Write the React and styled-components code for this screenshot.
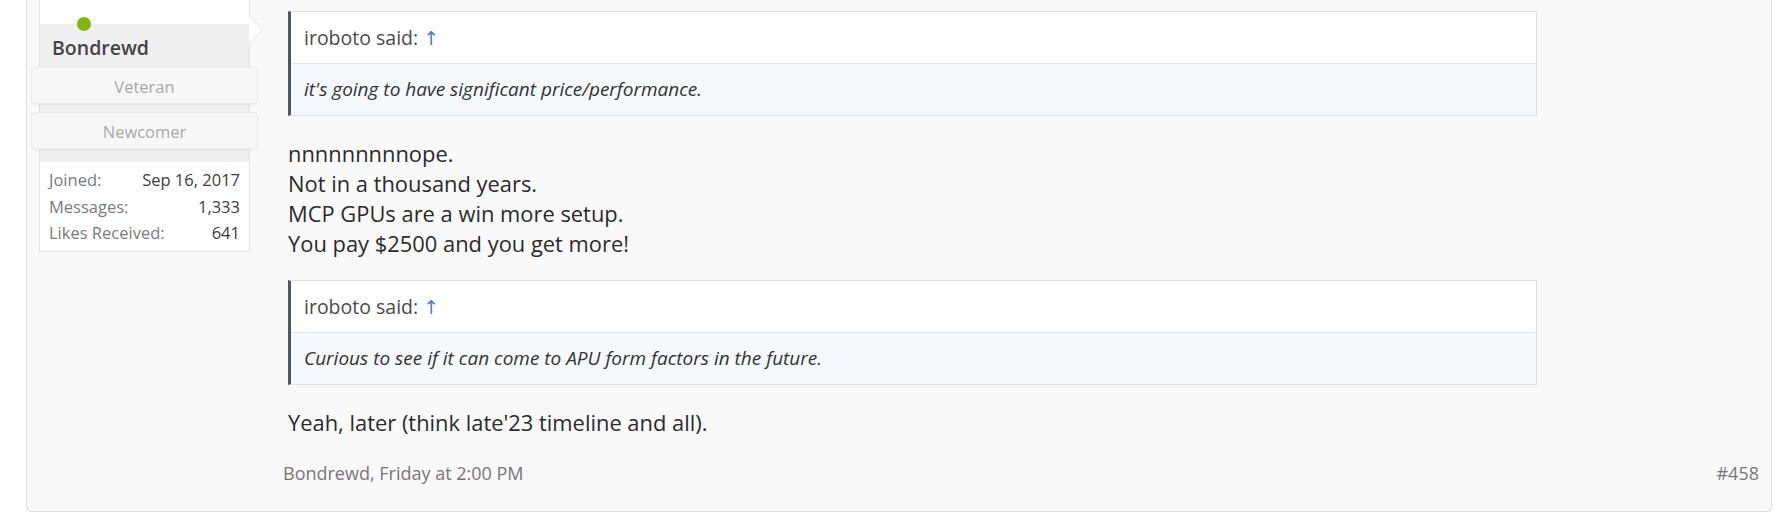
import React from 'react';
import styled, { createGlobalStyle } from 'styled-components';

const GlobalStyle = createGlobalStyle`
    body {
        margin: 0;
        background: #fff;
        font-family: "Open Sans", "Noto Sans", sans-serif;
    }
`;

const Page = styled.div`
    padding: 0 11px 11px 26px;
`;

const Post = styled.div`
    display: flex;
    background: #f9f9f9;
    border: 1px solid #dddddd;
    border-top: none;
    border-radius: 0 0 6px 6px;
    padding: 0 12px 0 12px;
`;

const UserCol = styled.div`
    width: 211px;
    flex-shrink: 0;
    margin-right: 38px;
`;

const UserBox = styled.div`
    position: relative;
    background: #fff;
    border: 1px solid #e3e3e3;
    border-top: none;
`;

const AvatarArea = styled.div`
    height: 24px;
    background: #fff;
`;

const OnlineDot = styled.span`
    position: absolute;
    left: 37px;
    top: 17px;
    width: 14px;
    height: 14px;
    border-radius: 50%;
    background: #7fb70e;
    z-index: 2;
`;

const Arrow = styled.span`
    position: absolute;
    left: 100%;
    top: 15px;
    width: 0;
    height: 0;
    border-top: 15px solid transparent;
    border-bottom: 15px solid transparent;
    border-left: 14px solid #e3e3e3;
    &::after {
        content: '';
        position: absolute;
        left: -14px;
        top: -14px;
        border-top: 14px solid transparent;
        border-bottom: 14px solid transparent;
        border-left: 13px solid #fff;
    }
`;

const NameBand = styled.div`
    background: #f0f0f0;
    padding: 12px 0 13px 12px;
`;

const UserName = styled.div`
    font-size: 19.5px;
    font-weight: 600;
    color: #444;
    line-height: 24px;
    margin-bottom: 7px;
`;

const Badge = styled.div`
    margin: 0 -9px 8px -21px;
    height: 37px;
    line-height: 37px;
    text-align: center;
    font-size: 16.5px;
    color: #a8a8a8;
    background: #f7f7f7;
    border: 1px solid #ececec;
    border-radius: 4px;
    box-sizing: border-box;
    box-shadow: 0 1px 3px rgba(0, 0, 0, 0.06);
    &:last-child {
        margin-bottom: 0;
    }
`;

const Info = styled.dl`
    margin: 0;
    padding: 5px 9px 4px 9px;
    font-size: 16.5px;
    line-height: 26.7px;
`;

const InfoRow = styled.div`
    display: flex;
    justify-content: space-between;
    dt {
        color: #7b7b7b;
    }
    dd {
        margin: 0;
        color: #3c3c3c;
    }
`;

const MessageCol = styled.div`
    flex: 1;
    min-width: 0;
    padding-top: 11px;
`;

const Quote = styled.div`
    max-width: 1249px;
    box-sizing: border-box;
    border: 1px solid #e1e1e1;
    border-left: 3px solid #47596a;
    margin: ${p => (p.first ? '0' : '21px')} 0 23px 0;
    line-height: 27px;
`;

const QuoteHead = styled.div`
    background: #fff;
    padding: 12px 13px 12px 13px;
    border-bottom: 1px solid #e1e4e7;
    font-size: 19.5px;
    color: #4a4a4a;
`;

const UpLink = styled.span`
    font-family: "DejaVu Sans", sans-serif;
    font-size: 19px;
    line-height: 0;
    color: #5580b5;
`;

const QuoteBody = styled.div`
    background: #f5f9fc;
    padding: 12px 13px 12px 13px;
    font-size: 19px;
    font-style: italic;
    color: #333;
`;

const Text = styled.div`
    font-size: 21.9px;
    line-height: 30px;
    color: #2b2b2b;
`;

const Meta = styled.div`
    display: flex;
    justify-content: space-between;
    margin-top: 23px;
    padding: 0 0 25px 0;
    margin-left: -5px;
    font-size: 18px;
    line-height: 25px;
    color: #777;
`;

const App = () => {
    return (
        <>
        <GlobalStyle/>
        <Page>
            <Post>
                <UserCol>
                    <UserBox>
                        <AvatarArea/>
                        <OnlineDot/>
                        <Arrow/>
                        <NameBand>
                            <UserName>Bondrewd</UserName>
                            <Badge>Veteran</Badge>
                            <Badge>Newcomer</Badge>
                        </NameBand>
                        <Info>
                            <InfoRow><dt>Joined:</dt><dd>Sep 16, 2017</dd></InfoRow>
                            <InfoRow><dt>Messages:</dt><dd>1,333</dd></InfoRow>
                            <InfoRow><dt>Likes Received:</dt><dd>641</dd></InfoRow>
                        </Info>
                    </UserBox>
                </UserCol>
                <MessageCol>
                    <Quote first>
                        <QuoteHead>iroboto said: <UpLink>↑</UpLink></QuoteHead>
                        <QuoteBody>it's going to have significant price/performance.</QuoteBody>
                    </Quote>
                    <Text>
                        nnnnnnnnnope.<br/>
                        Not in a thousand years.<br/>
                        MCP GPUs are a win more setup.<br/>
                        You pay $2500 and you get more!
                    </Text>
                    <Quote>
                        <QuoteHead>iroboto said: <UpLink>↑</UpLink></QuoteHead>
                        <QuoteBody>Curious to see if it can come to APU form factors in the future.</QuoteBody>
                    </Quote>
                    <Text>Yeah, later (think late'23 timeline and all).</Text>
                    <Meta>
                        <span>Bondrewd, Friday at 2:00 PM</span>
                        <span>#458</span>
                    </Meta>
                </MessageCol>
            </Post>
        </Page>
        </>
    );
};

export default App;
